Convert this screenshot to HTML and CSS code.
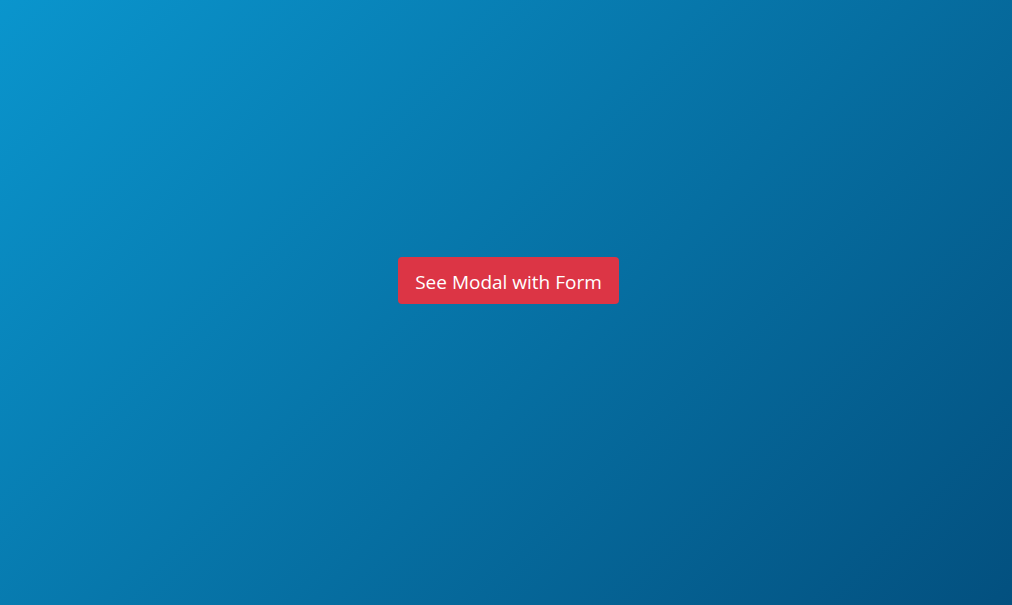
FILE: index.html
```html
<!DOCTYPE html>
<html lang="en">
<head>
<meta charset="utf-8">
<title>Modal with Form</title>
<link rel="stylesheet" href="styles.css">
</head>
<body>
<main class="stage">
  <button type="button" class="btn-danger">See Modal with Form</button>
</main>
</body>
</html>
```
FILE: styles.css
```css
html, body {
  margin: 0;
  padding: 0;
  height: 100%;
}
body {
  background: linear-gradient(135deg, #0a95cd 0%, #03507f 100%);
  font-family: "Open Sans", "Noto Sans", sans-serif;
}
.stage {
  box-sizing: border-box;
  height: 100%;
  display: flex;
  align-items: center;
  justify-content: center;
  padding: 0 0 44px 5px;
}
.btn-danger {
  box-sizing: border-box;
  flex: none;
  background: #dc3545;
  color: #fff;
  border: none;
  border-radius: 4px;
  font-family: "Open Sans", "Noto Sans", sans-serif;
  font-size: 19px;
  line-height: 28px;
  padding: 11px 10px 8px;
  width: 221px;
  height: 47px;
  cursor: pointer;
}
```
